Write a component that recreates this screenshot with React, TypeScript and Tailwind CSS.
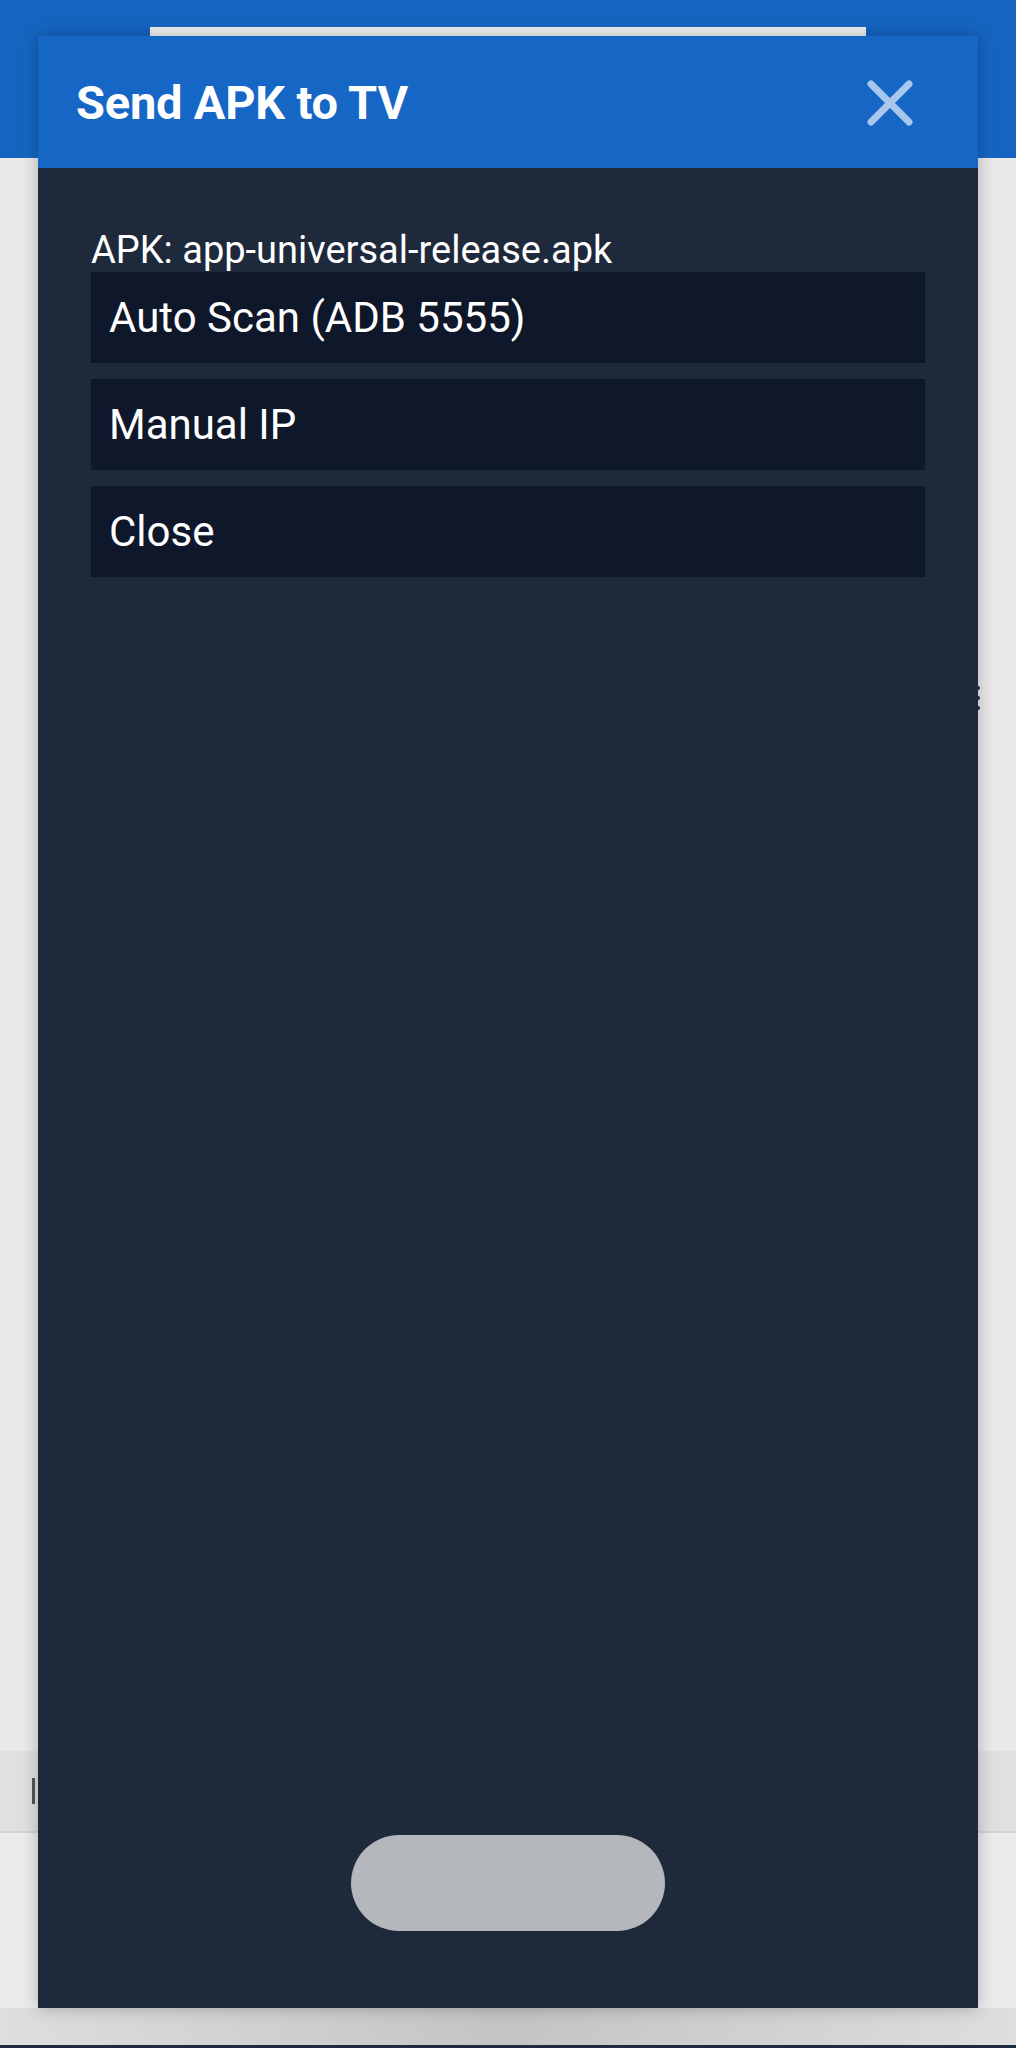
import React from "react";

export default function App() {
  return (
    <div
      className="relative w-[1016px] h-[2048px] overflow-hidden bg-[#e9e9e9]"
      style={{ fontFamily: "Roboto, 'Noto Sans', sans-serif" }}
    >
      {/* background app */}
      <div className="flex flex-col h-full">
        <div className="h-[158px] bg-[#1565c0] shrink-0" />
        <div className="flex-1 flex flex-col">
          <div className="flex-1 bg-[#e9e9e9]" />
          <div className="h-[82px] bg-[#e0e0e0] border-b-2 border-[#d2d2d2] flex items-center pl-[32px]">
            <div className="w-[3px] h-[26px] bg-[#555]" />
          </div>
          <div className="h-[212px] bg-[#ebebeb]" />
          <div className="h-[3px] bg-[#1c2a44]" />
        </div>
      </div>

      {/* dots partially hidden */}
      <div className="absolute left-[976px] top-[686px] flex flex-col gap-[6px]">
        <div className="w-[4px] h-[4px] rounded-full bg-[#222b3a]" />
        <div className="w-[4px] h-[4px] rounded-full bg-[#222b3a]" />
        <div className="w-[4px] h-[4px] rounded-full bg-[#222b3a]" />
      </div>

      {/* white line */}
      <div className="absolute left-[150px] top-[27px] w-[716px] h-[9px] bg-[#eeeeee]" />

      {/* shadow below modal */}
      <div className="absolute left-0 top-[2008px] w-[1016px] h-[37px] bg-gradient-to-r from-[#dedede] via-[#c4c4c4] to-[#dedede]" />

      {/* modal */}
      <div className="absolute left-[38px] top-[36px] w-[940px] h-[1972px] flex flex-col bg-[#1e293b] shadow-[0_0_16px_rgba(0,0,0,0.25)]">
        <div className="h-[132px] bg-[#1666c5] flex items-center justify-between pl-[38px] pr-[64px] shrink-0">
          <span className="text-white font-bold text-[47px] leading-none tracking-[-0.2px]">
            Send APK to TV
          </span>
          <svg width="48" height="48" viewBox="0 0 48 48" className="mt-[2px]">
            <path
              d="M5 5 L43 43 M43 5 L5 43"
              stroke="#a9c6ec"
              strokeWidth="7"
              strokeLinecap="round"
              fill="none"
            />
          </svg>
        </div>
        <div className="flex-1 flex flex-col px-[53px] pt-[60px]">
          <div className="text-white text-[38px] leading-[44px]">
            APK: app-universal-release.apk
          </div>
          <div className="flex flex-col gap-[16px]">
            {["Auto Scan (ADB 5555)", "Manual IP", "Close"].map((t) => (
              <div
                key={t}
                className="h-[91px] bg-[#0f172a] flex items-center pl-[18px] text-white text-[42px]"
              >
                {t}
              </div>
            ))}
          </div>
          <div className="flex-1" />
          <div className="flex justify-center pb-[77px]">
            <div className="w-[314px] h-[96px] rounded-full bg-[#b4b7bc]" />
          </div>
        </div>
      </div>
    </div>
  );
}
